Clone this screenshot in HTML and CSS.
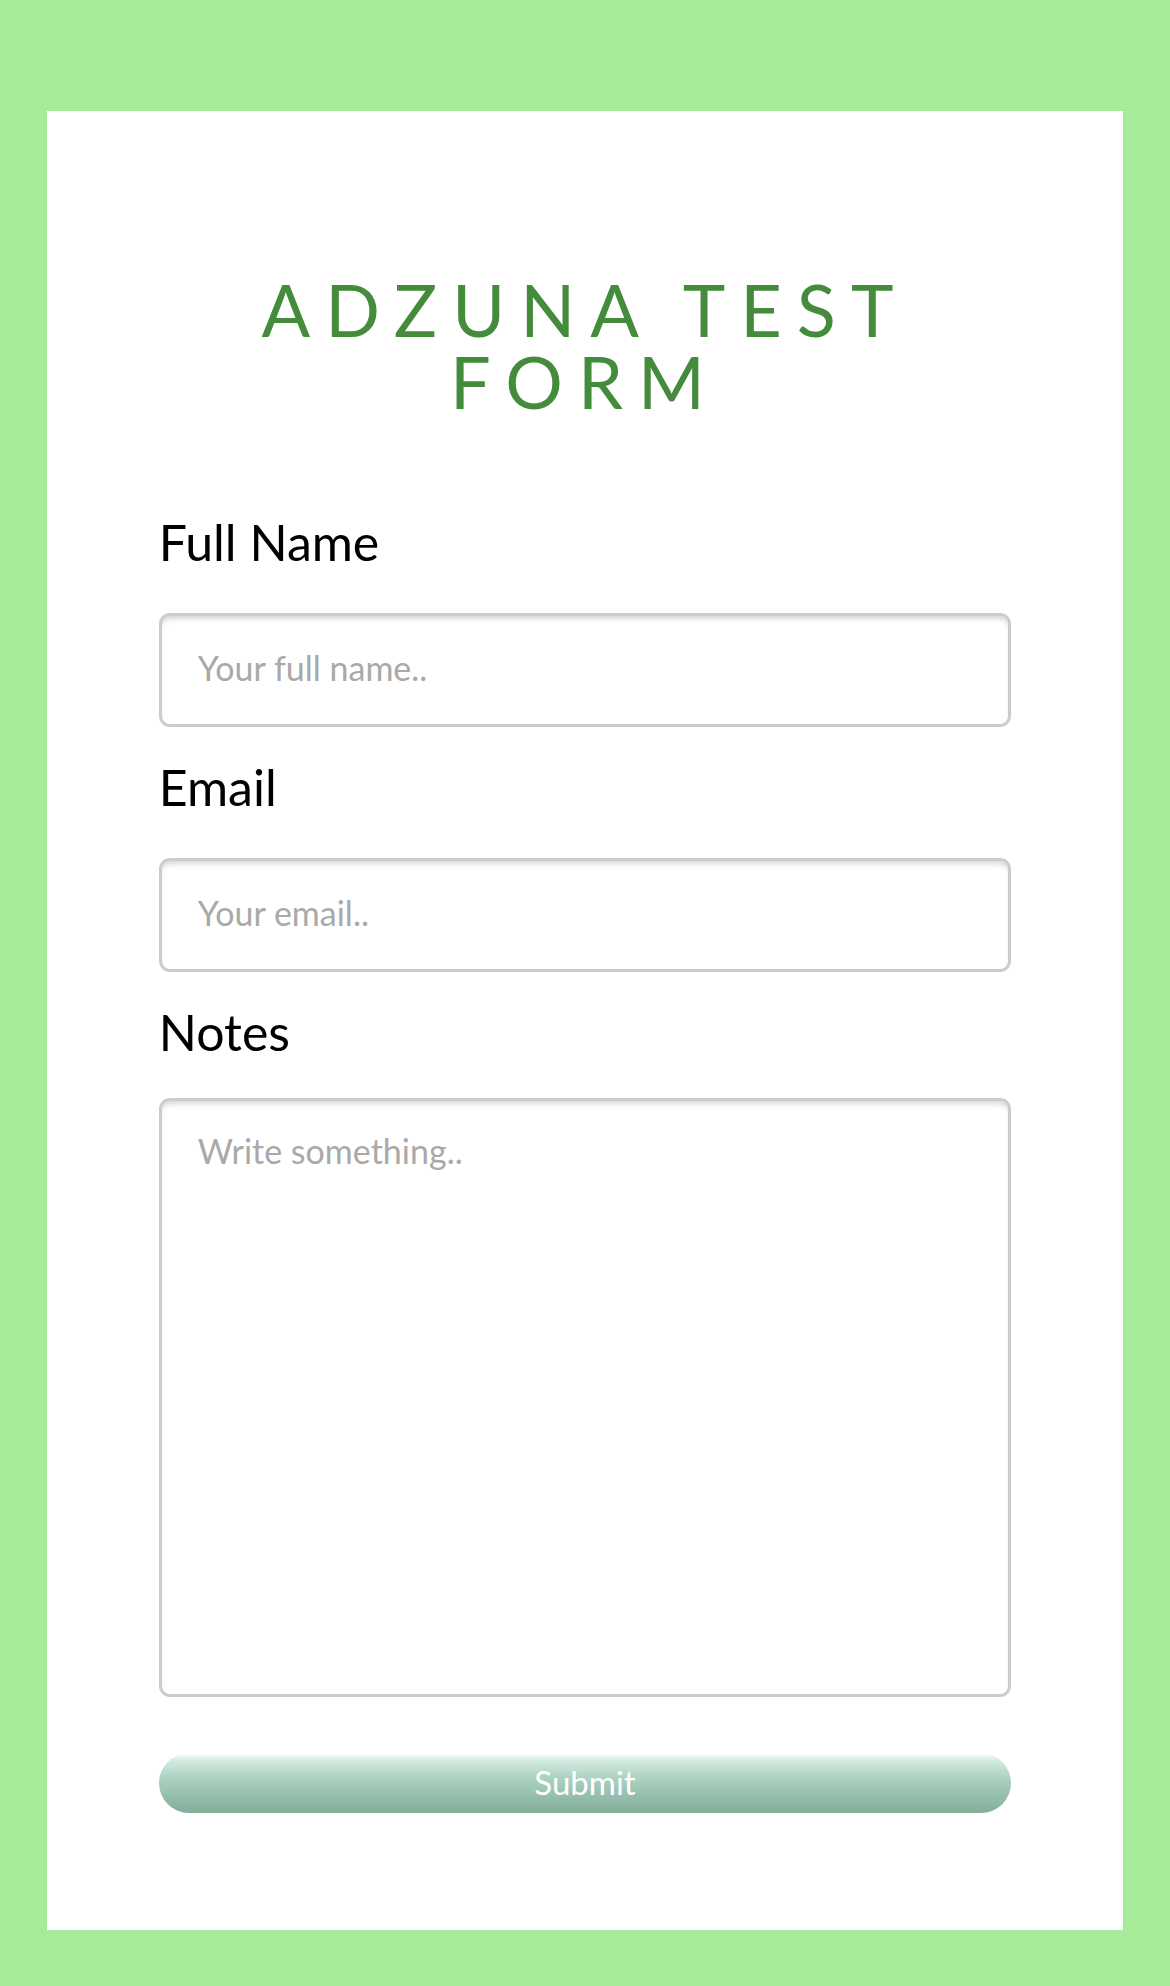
FILE: index.html
```html
<!DOCTYPE html>
<html lang="en">
<head>
<meta charset="utf-8">
<title>Adzuna Test Form</title>
<link rel="stylesheet" href="styles.css">
</head>
<body>
  <main class="card">
    <h1 class="title">ADZUNA TEST<br>FORM</h1>
    <form class="form">
      <label class="label" for="fullname">Full Name</label>
      <input class="field" id="fullname" type="text" placeholder="Your full name..">
      <label class="label" for="email">Email</label>
      <input class="field" id="email" type="text" placeholder="Your email..">
      <label class="label label-notes" for="notes">Notes</label>
      <textarea class="field area" id="notes" placeholder="Write something.."></textarea>
      <button class="submit" type="button">Submit</button>
    </form>
  </main>
</body>
</html>
```

FILE: styles.css
```css
html, body {
  margin: 0;
  padding: 0;
}

body {
  background: #a7eb9a;
  font-family: Lato, "Open Sans", sans-serif;
  padding: 111px 0 55px;
}

.card {
  width: 92%;
  margin: 0 auto;
  background: #ffffff;
  box-sizing: border-box;
  padding: 162px 112px 117px;
}

.title {
  margin: 0;
  text-align: center;
  color: #448b3c;
  font-family: Lato, sans-serif;
  font-weight: 400;
  font-size: 72px;
  line-height: 72px;
  letter-spacing: 15px;
}

.form {
  display: flex;
  flex-direction: column;
  margin-top: 95px;
}

.label {
  display: block;
  font-size: 50px;
  line-height: 60px;
  color: #000;
  margin-bottom: 41px;
}

.label-notes {
  margin-bottom: 36px;
}

.field {
  display: block;
  width: 100%;
  box-sizing: border-box;
  height: 114px;
  margin: 0 0 30px;
  padding: 0 36px 5px;
  border: 3px solid #cccccc;
  border-radius: 11px;
  background: #ffffff;
  box-shadow: inset 0 5px 5px -2px rgba(0, 0, 0, 0.16);
  font-family: Lato, sans-serif;
  font-size: 34px;
  color: #333;
  outline: none;
}

.field::placeholder {
  color: #a9a9a9;
}

.area {
  height: 599px;
  padding: 29px 36px;
  margin-bottom: 56px;
  resize: none;
  line-height: 41px;
}

.submit {
  display: block;
  width: 100%;
  height: 60px;
  border: none;
  border-radius: 30px;
  background: linear-gradient(to bottom, #ffffff 0%, #d4ebe1 12%, #aed3c3 40%, #96bfad 70%, #84ad9a 100%);
  color: #ffffff;
  font-family: Lato, sans-serif;
  font-size: 33px;
  padding: 0 0 2px;
  cursor: pointer;
}
```
